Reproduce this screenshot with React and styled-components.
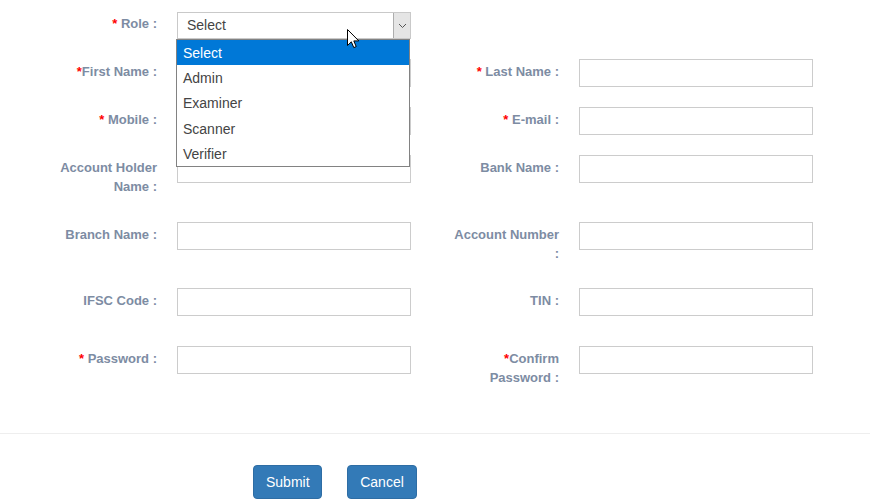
import React from "react";
import styled, { createGlobalStyle } from "styled-components";

const GlobalStyle = createGlobalStyle`
  html, body { margin: 0; padding: 0; background: #fff; }
  body { font-family: "Liberation Sans", Arial, sans-serif; }
  * { box-sizing: border-box; }
`;

const Page = styled.div`
  position: relative;
  width: 870px;
  height: 502px;
  overflow: hidden;
  padding-top: 11px;
`;

const Form = styled.div`
  padding-left: 47px;
  display: flex;
  flex-direction: column;
`;

const Row = styled.div`
  display: flex;
  gap: 38px;
  height: ${(p) => p.$h}px;
`;

const Field = styled.div`
  display: flex;
  gap: 20px;
  align-items: flex-start;
  position: relative;
`;

const Label = styled.label`
  width: 110px;
  text-align: right;
  font-weight: bold;
  font-size: 13px;
  line-height: 19px;
  padding-top: 3px;
  color: #7d8ca3;
`;

const Star = styled.span`
  color: #f00;
`;

const Input = styled.input`
  width: 234px;
  height: 28px;
  margin: 0;
  border: 1px solid #cccccc;
  background: #fff;
  padding: 0 6px;
  font: 14px "Liberation Sans", Arial, sans-serif;
`;

const SelectBox = styled.div`
  position: relative;
  width: 234px;
  height: 27px;
  margin-top: 1px;
  border: 1px solid #c9c9c9;
  background: #fff;
  display: flex;
  align-items: center;
  padding: 0 0 2px 9px;
  font-size: 14px;
  color: #444;
`;

const ArrowBox = styled.div`
  position: absolute;
  right: 0;
  top: 0;
  width: 17px;
  height: 25px;
  background: #e5e5e5;
  border-left: 1px solid #adadad;
  display: flex;
  align-items: center;
  justify-content: center;
`;

const SelectWrap = styled.div`
  position: relative;
`;

const Dropdown = styled.ul`
  position: absolute;
  top: 28px;
  left: -1px;
  width: 234px;
  margin: 0;
  padding: 0;
  list-style: none;
  background: #fff;
  border: 1px solid #828282;
  z-index: 5;
`;

const Option = styled.li`
  height: 25.2px;
  line-height: 24px;
  padding: 1px 0 0 6px;
  font-size: 14px;
  color: ${(p) => (p.$active ? "#fff" : "#444")};
  background: ${(p) => (p.$active ? "#0078d7" : "transparent")};
`;

const Divider = styled.hr`
  margin: 0;
  border: 0;
  border-top: 1px solid #eeeeee;
`;

const Actions = styled.div`
  display: flex;
  gap: 25px;
  padding: 31px 0 0 253px;
`;

const Button = styled.button`
  font: 14px "Liberation Sans", Arial, sans-serif;
  line-height: 20px;
  padding: 6px 12px;
  color: #fff;
  background: #337ab7;
  border: 1px solid #2e6da4;
  border-radius: 4px;
  height: 34px;
  width: ${(p) => p.$w}px;
`;

const Cursor = styled.svg`
  position: absolute;
  left: 347px;
  top: 29px;
  z-index: 10;
`;

const options = ["Select", "Admin", "Examiner", "Scanner", "Verifier"];

const Lbl = ({ req, tight, children }) => (
  <Label>
    {req && <Star>{tight ? "*" : "* "}</Star>}
    {children}
  </Label>
);

export default function App() {
  return (
    <>
      <GlobalStyle />
      <Page>
        <Form>
          <Row $h={48}>
            <Field>
              <Lbl req>Role :</Lbl>
              <SelectWrap>
                <SelectBox>
                  Select
                  <ArrowBox>
                    <svg width="9" height="6" viewBox="0 0 9 6">
                      <path d="M1 1 L4.5 4.5 L8 1" fill="none" stroke="#555" strokeWidth="1" />
                    </svg>
                  </ArrowBox>
                </SelectBox>
                <Dropdown>
                  {options.map((o, i) => (
                    <Option key={o} $active={i === 0}>
                      {o}
                    </Option>
                  ))}
                </Dropdown>
              </SelectWrap>
            </Field>
          </Row>
          <Row $h={48}>
            <Field>
              <Lbl req tight>First Name :</Lbl>
              <Input />
            </Field>
            <Field>
              <Lbl req>Last Name :</Lbl>
              <Input />
            </Field>
          </Row>
          <Row $h={48}>
            <Field>
              <Lbl req>Mobile :</Lbl>
              <Input />
            </Field>
            <Field>
              <Lbl req>E-mail :</Lbl>
              <Input />
            </Field>
          </Row>
          <Row $h={67}>
            <Field>
              <Lbl>Account Holder Name :</Lbl>
              <Input />
            </Field>
            <Field>
              <Lbl>Bank Name :</Lbl>
              <Input />
            </Field>
          </Row>
          <Row $h={66}>
            <Field>
              <Lbl>Branch Name :</Lbl>
              <Input />
            </Field>
            <Field>
              <Lbl>Account Number :</Lbl>
              <Input />
            </Field>
          </Row>
          <Row $h={58}>
            <Field>
              <Lbl>IFSC Code :</Lbl>
              <Input />
            </Field>
            <Field>
              <Lbl>TIN :</Lbl>
              <Input />
            </Field>
          </Row>
          <Row $h={87}>
            <Field>
              <Lbl req>Password :</Lbl>
              <Input type="password" />
            </Field>
            <Field>
              <Lbl req tight>Confirm Password :</Lbl>
              <Input type="password" />
            </Field>
          </Row>
        </Form>
        <Divider />
        <Actions>
          <Button $w={69}>Submit</Button>
          <Button $w={70}>Cancel</Button>
        </Actions>
        <Cursor width="13" height="20" viewBox="0 0 13 20">
          <path
            d="M0.5 0.5 L0.5 16.5 L4.3 12.8 L6.8 18.6 L9.2 17.6 L6.8 11.9 L11.8 11.9 Z"
            fill="#fff"
            stroke="#000"
            strokeWidth="1"
            strokeLinejoin="miter"
          />
        </Cursor>
      </Page>
    </>
  );
}
